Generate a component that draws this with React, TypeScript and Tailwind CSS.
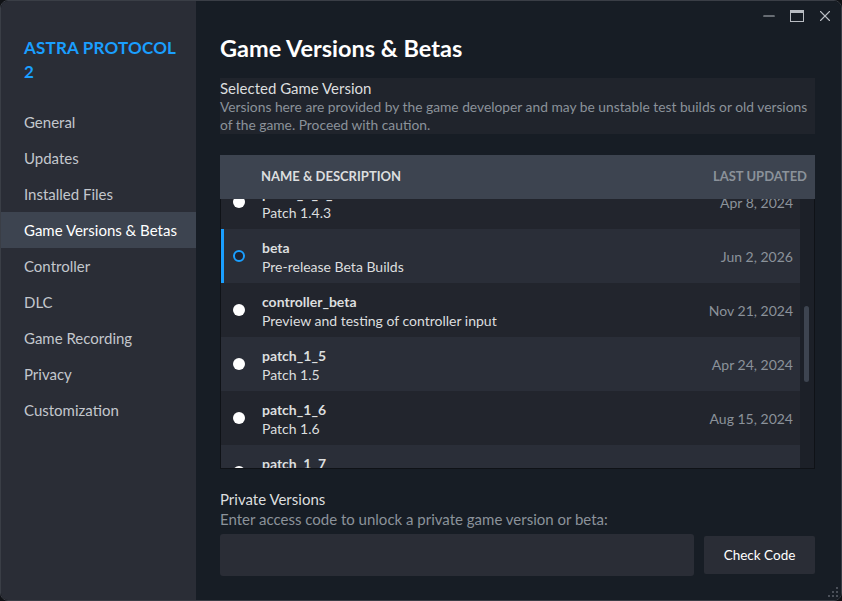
import { Minus, X } from "lucide-react";

const nav = [
  "General",
  "Updates",
  "Installed Files",
  "Game Versions & Betas",
  "Controller",
  "DLC",
  "Game Recording",
  "Privacy",
  "Customization",
];

const versions = [
  { name: "patch_1_4_3", desc: "Patch 1.4.3", date: "Apr 8, 2024" },
  { name: "beta", desc: "Pre-release Beta Builds", date: "Jun 2, 2026", selected: true },
  { name: "controller_beta", desc: "Preview and testing of controller input", date: "Nov 21, 2024" },
  { name: "patch_1_5", desc: "Patch 1.5", date: "Apr 24, 2024" },
  { name: "patch_1_6", desc: "Patch 1.6", date: "Aug 15, 2024" },
  { name: "patch_1_7", desc: "Patch 1.7", date: "Oct 2, 2024" },
];

function Radio({ on }: { on?: boolean }) {
  if (on) {
    return <span className="block h-[12px] w-[12px] rounded-full border-[2px] border-[#1a9fff] bg-[#1d2230]" />;
  }
  return <span className="block h-[12px] w-[12px] rounded-full bg-white" />;
}

export default function App() {
  return (
    <div className="h-[601px] w-[842px] bg-[#101216] font-['Lato',sans-serif]">
      <div className="relative flex h-[601px] w-[842px] overflow-hidden rounded-lg border border-[#3a3e46]">
        {/* yellow bits of whatever sits behind the window */}
        <div className="absolute left-[314px] top-0 h-[1px] w-[6px] bg-[#c9a227]" />
        <div className="absolute left-[352px] top-0 h-[1px] w-[6px] bg-[#c9a227]" />
        <div className="absolute left-[389px] top-0 h-[1px] w-[6px] bg-[#c9a227]" />
        <div className="absolute left-[429px] top-0 h-[1px] w-[6px] bg-[#c9a227]" />
        <div className="absolute left-[479px] top-0 h-[1px] w-[148px] bg-[#c9a227]" />

        <aside className="flex w-[195px] shrink-0 flex-col bg-[#2a2d36] pt-[35px]">
          <h1 className="pl-[23px] pr-2 text-[17px] font-bold leading-[24px] tracking-[0.2px] text-[#1a9fff]">
            <span className="whitespace-nowrap">ASTRA PROTOCOL</span>
            <br />2
          </h1>
          <nav className="mt-[20px] flex flex-col">
            {nav.map((n) => (
              <div
                key={n}
                className={
                  n === "Game Versions & Betas"
                    ? "flex h-[36px] items-center whitespace-nowrap bg-[#3d4450] pl-[23px] text-[15px] text-white"
                    : "flex h-[36px] items-center whitespace-nowrap pl-[23px] text-[15px] text-[#c3c7cd]"
                }
              >
                {n}
              </div>
            ))}
          </nav>
        </aside>

        <main className="relative flex flex-1 flex-col bg-[#171d25] pl-[24px] pr-[26px]">
          <div className="absolute right-[7px] top-[6px] flex items-center gap-[12px] text-[#b8bcc2]">
            <Minus size={18} strokeWidth={1.5} />
            <span className="block h-[12px] w-[14px] border-[1.5px] border-t-[3px] border-[#b8bcc2]" />
            <X size={18} strokeWidth={1.5} />
          </div>

          <h2 className="mt-[32px] text-[23.5px] font-bold leading-[30px] text-white">Game Versions &amp; Betas</h2>

          <section className="mt-[15px] bg-[#20242c]">
            <p className="text-[15px] leading-[20px] text-[#dcdedf]">Selected Game Version</p>
            <p className="text-[13.8px] leading-[18px] text-[#8b929a]">
              Versions here are provided by the game developer and may be unstable test builds or old versions of the game. Proceed with caution.
            </p>
          </section>

          <div className="mt-[21px] flex h-[44px] items-center justify-between bg-[#3d4450] pl-[41px] pr-[8px] text-[13px] font-bold uppercase">
            <span className="text-[#dcdedf]">Name &amp; Description</span>
            <span className="text-[#8b929a]">Last Updated</span>
          </div>

          <div className="flex h-[270px] border border-t-0 border-[#0f1217]">
            <div className="h-full flex-1 overflow-hidden">
              <div className="-mt-[24px]">
                {versions.map((v, i) => (
                  <div
                    key={v.name}
                    className={`flex h-[54px] items-center border-l-[3px] pr-[7px] ${
                      v.selected ? "border-[#1a9fff]" : "border-transparent"
                    } ${i % 2 === 1 ? "bg-[#2a2e38]" : "bg-[#22252d]"}`}
                  >
                    <div className="mr-[8px] flex w-[30px] justify-center">
                      <Radio on={v.selected} />
                    </div>
                    <div className="flex flex-1 flex-col pt-[2px]">
                      <span className="text-[14px] font-bold leading-[19px] text-[#dcdedf]">{v.name}</span>
                      <span className="text-[14px] leading-[20px] text-[#dcdedf]">{v.desc}</span>
                    </div>
                    <span className="text-[14px] text-[#8b929a]">{v.date}</span>
                  </div>
                ))}
              </div>
            </div>
            <div className="w-[14px] bg-[#1c2028] pl-[4px] pt-[107px]">
              <div className="h-[76px] w-[5px] rounded-full bg-[#3d4450]" />
            </div>
          </div>

          <p className="mt-[20px] text-[15px] leading-[20px] text-[#dcdedf]">Private Versions</p>
          <p className="text-[15px] leading-[20px] text-[#8b929a]">Enter access code to unlock a private game version or beta:</p>
          <div className="mt-[5px] flex items-center gap-[10px]">
            <input className="h-[42px] flex-1 rounded-[3px] bg-[#2a2d36] px-3 text-[14px] text-white outline-none" />
            <button className="h-[38px] w-[111px] rounded-[2px] bg-[#2a2d36] text-[13.5px] text-white">Check Code</button>
          </div>

          <div className="absolute bottom-[3px] right-[3px] grid grid-cols-3 gap-[2px]">
            <span />
            <span />
            <span className="h-[2px] w-[2px] bg-[#4a4f58]" />
            <span />
            <span className="h-[2px] w-[2px] bg-[#4a4f58]" />
            <span className="h-[2px] w-[2px] bg-[#4a4f58]" />
            <span className="h-[2px] w-[2px] bg-[#4a4f58]" />
            <span className="h-[2px] w-[2px] bg-[#4a4f58]" />
            <span className="h-[2px] w-[2px] bg-[#4a4f58]" />
          </div>
        </main>
      </div>
    </div>
  );
}
